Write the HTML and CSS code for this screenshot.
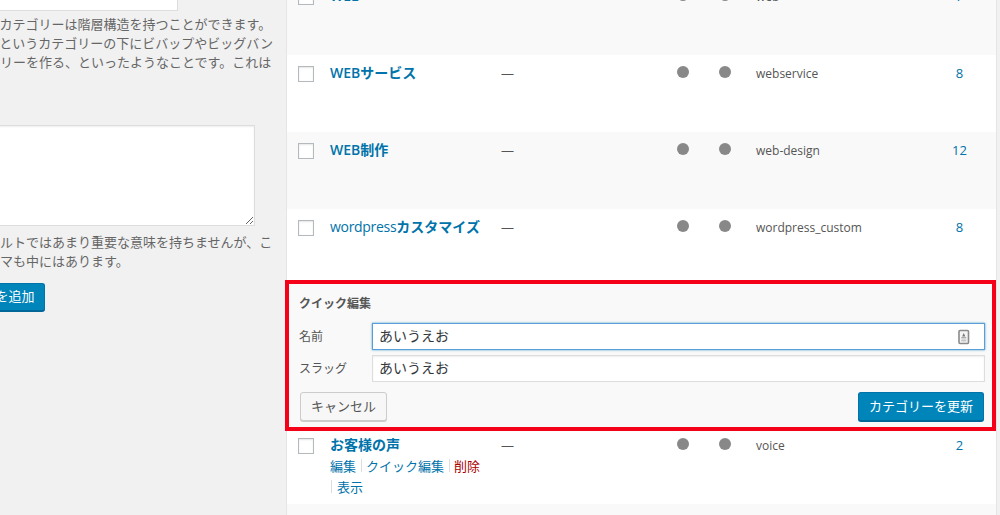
FILE: index.html
```html
<!DOCTYPE html>
<html lang="ja">
<head>
<meta charset="utf-8">
<title>カテゴリー</title>
<link rel="stylesheet" href="styles.css">
</head>
<body>
<div class="page">
  <aside class="form-col">
    <input class="top-input" type="text">
    <p class="desc">タグとは異なり、カテゴリーは階層構造を持つことができます。<br>例えば「ジャズ」というカテゴリーの下にビバップやビッグバン<br>ドという子カテゴリーを作る、といったようなことです。これは<br>任意です。</p>
    <textarea class="desc-area"></textarea>
    <p class="desc desc-second">この説明はデフォルトではあまり重要な意味を持ちませんが、こ<br>れを表示するテーマも中にはあります。</p>
    <button class="btn btn-primary btn-add" type="button">新規カテゴリーを追加</button>
  </aside>
  <main class="table-col">
    <table class="list">
      <colgroup>
        <col class="c-cb"><col class="c-name"><col class="c-desc"><col class="c-dot1"><col class="c-dot2"><col class="c-slug"><col class="c-count">
      </colgroup>
      <tbody>
        <tr class="alt">
          <td><span class="cb"></span></td>
          <td><a class="name">WEB</a></td>
          <td>—</td>
          <td><span class="dot"></span></td>
          <td><span class="dot"></span></td>
          <td class="slug">web</td>
          <td class="count">7</td>
        </tr>
        <tr>
          <td><span class="cb"></span></td>
          <td><a class="name">WEBサービス</a></td>
          <td>—</td>
          <td><span class="dot"></span></td>
          <td><span class="dot"></span></td>
          <td class="slug">webservice</td>
          <td class="count">8</td>
        </tr>
        <tr class="alt">
          <td><span class="cb"></span></td>
          <td><a class="name">WEB制作</a></td>
          <td>—</td>
          <td><span class="dot"></span></td>
          <td><span class="dot"></span></td>
          <td class="slug">web-design</td>
          <td class="count">12</td>
        </tr>
        <tr class="short">
          <td><span class="cb"></span></td>
          <td class="nowrap"><a class="name"><span class="name-latin">wordpress</span>カスタマイズ</a></td>
          <td>—</td>
          <td><span class="dot"></span></td>
          <td><span class="dot"></span></td>
          <td class="slug">wordpress_custom</td>
          <td class="count">8</td>
        </tr>
        <tr class="edit-row">
          <td colspan="7">
            <form class="quick">
              <h4 class="quick-title">クイック編集</h4>
              <label class="field">
                <span class="field-label">名前</span>
                <span class="input-wrap">
                  <input class="text-input focused" type="text" value="あいうえお">
                  <svg class="input-icon" width="14" height="16" viewBox="0 0 14 16" aria-hidden="true">
                    <rect x="2" y="1.5" width="9.5" height="13" rx="1" fill="#f4f4f4" stroke="#8a8a8a" stroke-width="1.6"/>
                    <path d="M6.75 4l1.6 3.4H5.15z" fill="#777"/>
                    <rect x="4.25" y="8" width="5" height="1.4" fill="#aaa"/>
                    <rect x="4.25" y="10.4" width="5" height="2" fill="#c4c4c4"/>
                  </svg>
                </span>
              </label>
              <label class="field">
                <span class="field-label">スラッグ</span>
                <span class="input-wrap"><input class="text-input" type="text" value="あいうえお"></span>
              </label>
              <div class="quick-actions">
                <button class="btn btn-secondary" type="button">キャンセル</button>
                <button class="btn btn-primary btn-update" type="button">カテゴリーを更新</button>
              </div>
            </form>
          </td>
        </tr>
        <tr>
          <td><span class="cb"></span></td>
          <td colspan="2" class="voice-cell">
            <div class="voice-grid">
              <div class="voice-name">
                <a class="name">お客様の声</a>
                <div class="row-actions">
                  <a class="act">編集</a><span class="sep"></span><a class="act">クイック編集</a><span class="sep"></span><a class="act del">削除</a>
                </div>
                <div class="row-actions"><span class="sep sep-first"></span><a class="act">表示</a></div>
              </div>
              <div class="voice-desc">—</div>
            </div>
          </td>
          <td><span class="dot"></span></td>
          <td><span class="dot"></span></td>
          <td class="slug">voice</td>
          <td class="count">2</td>
        </tr>
        <tr class="alt">
          <td colspan="7"></td>
        </tr>
      </tbody>
    </table>
  </main>
</div>
<div class="highlight"></div>
</body>
</html>
```
FILE: styles.css
```css
html, body {
  margin: 0;
  padding: 0;
  height: 515px;
  overflow: hidden;
  background: #f1f1f1;
}
body {
  position: relative;
  font-family: "Open Sans", "Noto Sans CJK JP", sans-serif;
  font-size: 13px;
  line-height: 19px;
  color: #444;
}
.page {
  display: flex;
  align-items: flex-start;
  height: 515px;
  overflow: hidden;
}
.form-col {
  flex: 0 0 286px;
  display: flex;
  flex-direction: column;
  align-items: flex-start;
  overflow: hidden;
  width: 286px;
  height: 515px;
}
.top-input {
  box-sizing: border-box;
  flex: none;
  display: block;
  width: 282px;
  height: 28px;
  margin: -17px 0 0 -104px;
  background: #fff;
  border: 1px solid #ddd;
  padding: 0;
}
.desc {
  flex: none;
  margin: 4px 0 0 -104px;
  white-space: nowrap;
  color: #666;
  font-size: 13px;
  line-height: 19px;
}
.desc-area {
  flex: none;
  box-sizing: border-box;
  display: block;
  width: 359px;
  height: 101px;
  margin: 34px 0 0 -104px;
  background: #fff;
  border: 1px solid #ddd;
  box-shadow: inset 0 1px 2px rgba(0, 0, 0, .07);
  padding: 2px 6px;
}
.desc-second {
  margin-top: 7px;
}
.btn {
  box-sizing: border-box;
  font-family: inherit;
  font-size: 13px;
  line-height: 24px;
  height: 29px;
  border-radius: 3px;
  padding: 0 10px 2px;
  white-space: nowrap;
  cursor: pointer;
}
.btn-primary {
  background: #0085ba;
  border: 1px solid #0073aa;
  border-bottom-color: #006799;
  box-shadow: 0 1px 0 #006799;
  color: #fff;
}
.btn-secondary {
  width: 87px;
  background: #f7f7f7;
  border: 1px solid #ccc;
  box-shadow: 0 1px 0 #ccc;
  color: #555;
}
.btn-add {
  flex: none;
  width: 151px;
  height: 28px;
  margin: 12px 0 0 -106px;
  padding: 0 0 2px;
}
.table-col {
  flex: 0 0 711px;
  width: 711px;
  margin-top: -22px;
  border-left: 1px solid #e5e5e5;
  border-right: 1px solid #e5e5e5;
  box-sizing: border-box;
  background: #fff;
}
.list {
  width: 709px;
  table-layout: fixed;
  border-collapse: collapse;
  border-spacing: 0;
  color: #555;
}
.c-cb { width: 33px; }
.c-name { width: 171px; }
.c-desc { width: 176px; }
.c-dot1 { width: 42px; }
.c-dot2 { width: 37px; }
.c-slug { width: 177px; }
.c-count { width: 73px; }
.list tr {
  height: 77px;
}
.list tr.short {
  height: 75px;
}
.list tr.alt {
  background: #f9f9f9;
}
.list td {
  padding: 8px 10px 0;
  vertical-align: top;
  font-size: 13px;
  line-height: 20px;
  overflow: visible;
}
.list td:first-child {
  padding: 11px 0 0 11px;
}
.list td.nowrap {
  white-space: nowrap;
}
.list td.slug {
  padding-top: 9px;
  font-size: 12px;
}
.cb {
  box-sizing: border-box;
  display: block;
  width: 16px;
  height: 16px;
  background: #fff;
  border: 1px solid #b4b9be;
  box-shadow: inset 0 1px 2px rgba(0, 0, 0, .1);
}
.name {
  font-size: 14px;
  font-weight: 600;
  color: #0073aa;
}
.name-latin {
  font-weight: 400;
  letter-spacing: -.3px;
}
.dot {
  display: block;
  width: 12px;
  height: 12px;
  margin-top: 3px;
  border-radius: 50%;
  background: #888;
}
.count {
  text-align: center;
  color: #0073aa;
}
.list tr.edit-row {
  height: 143px;
  background: #f9f9f9;
}
.list tr.edit-row td {
  padding: 0;
}
.quick {
  display: flex;
  flex-direction: column;
  padding: 10px 11px 0 12px;
}
.quick-title {
  margin: 0;
  font-size: 12px;
  line-height: 20px;
  font-weight: 700;
  color: #555;
}
.field {
  display: flex;
  align-items: center;
  height: 27px;
  margin-top: 5px;
}
.quick-title + .field {
  margin-top: 9px;
}
.field-label {
  flex: 0 0 73px;
  font-size: 12px;
  color: #555;
}
.input-wrap {
  position: relative;
  flex: 1;
  display: block;
  height: 27px;
}
.text-input {
  box-sizing: border-box;
  display: block;
  width: 100%;
  height: 27px;
  margin: 0;
  padding: 0 6px 3px;
  font-family: inherit;
  font-size: 14px;
  color: #32373c;
  background: #fff;
  border: 1px solid #ddd;
  box-shadow: inset 0 1px 2px rgba(0, 0, 0, .07);
  outline: none;
}
.text-input.focused {
  border-color: #5b9dd9;
  box-shadow: 0 0 2px rgba(30, 140, 190, .8);
}
.input-icon {
  position: absolute;
  right: 14px;
  top: 6px;
}
.quick-actions {
  display: flex;
  justify-content: space-between;
  margin: 10px 1px 0 1px;
}
.btn-update {
  width: 126px;
  padding: 0 0 2px;
}
.voice-cell.voice-cell {
  padding: 0;
}
.voice-grid {
  display: grid;
  grid-template-columns: 171px 176px;
}
.voice-name {
  padding: 8px 0 0 10px;
  white-space: nowrap;
}
.voice-desc {
  padding: 8px 0 0 10px;
}
.row-actions {
  display: flex;
  align-items: center;
  height: 21px;
  font-size: 13px;
}
.act {
  color: #0073aa;
}
.act.del {
  color: #a00;
}
.sep {
  display: block;
  width: 1px;
  height: 13px;
  margin: 0 4px 0 5px;
  background: #ddd;
}
.sep-first {
  margin: 0 5px 0 1px;
}
.highlight {
  position: absolute;
  left: 285px;
  top: 280px;
  width: 711px;
  height: 151px;
  box-sizing: border-box;
  border: 4px solid #f40018;
  pointer-events: none;
}
```
